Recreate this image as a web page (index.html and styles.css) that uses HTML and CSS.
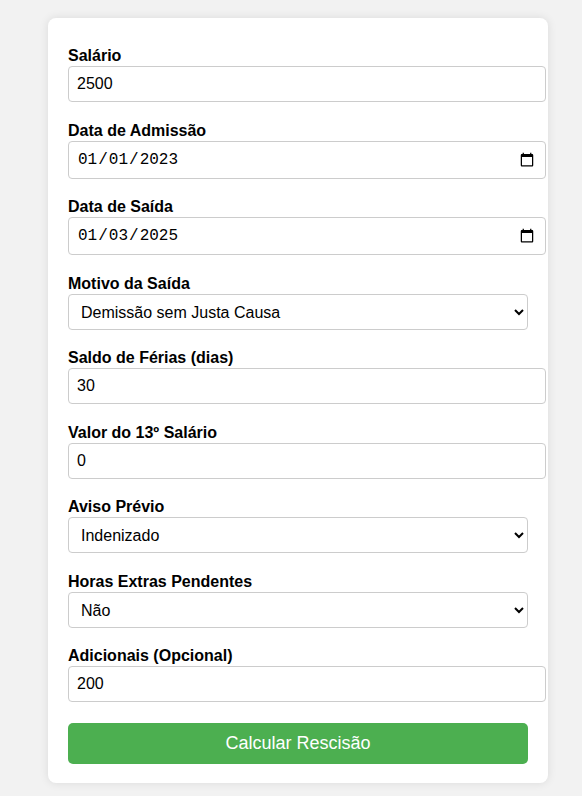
FILE: index.html
```html
<!DOCTYPE html>
<html lang="pt-BR">
<head>
<meta charset="utf-8">
<title>Calculadora de Rescisão</title>
<link rel="stylesheet" href="styles.css">
</head>
<body>
<div class="card">
  <form class="form">
    <div class="field">
      <label class="label" for="salario">Salário</label>
      <input class="control text" id="salario" type="number" value="2500">
    </div>
    <div class="field">
      <label class="label" for="admissao">Data de Admissão</label>
      <input class="control text date" id="admissao" type="date" value="2023-01-01">
    </div>
    <div class="field">
      <label class="label" for="saida">Data de Saída</label>
      <input class="control text date" id="saida" type="date" value="2025-01-03">
    </div>
    <div class="field">
      <label class="label" for="motivo">Motivo da Saída</label>
      <select class="control sel" id="motivo">
        <option>Demissão sem Justa Causa</option>
        <option>Demissão com Justa Causa</option>
        <option>Pedido de Demissão</option>
      </select>
    </div>
    <div class="field">
      <label class="label" for="ferias">Saldo de Férias (dias)</label>
      <input class="control text" id="ferias" type="number" value="30">
    </div>
    <div class="field">
      <label class="label" for="decimo">Valor do 13º Salário</label>
      <input class="control text" id="decimo" type="number" value="0">
    </div>
    <div class="field">
      <label class="label" for="aviso">Aviso Prévio</label>
      <select class="control sel" id="aviso">
        <option>Indenizado</option>
        <option>Trabalhado</option>
      </select>
    </div>
    <div class="field">
      <label class="label" for="horas">Horas Extras Pendentes</label>
      <select class="control sel" id="horas">
        <option>Não</option>
        <option>Sim</option>
      </select>
    </div>
    <div class="field">
      <label class="label" for="adicionais">Adicionais (Opcional)</label>
      <input class="control text" id="adicionais" type="number" value="200">
    </div>
    <button class="btn" type="button">Calcular Rescisão</button>
  </form>
</div>
</body>
</html>
```

FILE: styles.css
```css
html, body {
  margin: 0;
  padding: 0;
}
body {
  background: #f2f2f2;
  font-family: "Liberation Sans", Arial, sans-serif;
  padding: 18px 0 13px 48px;
}
.card {
  width: 500px;
  box-sizing: border-box;
  background: #fff;
  border-radius: 8px;
  box-shadow: 0 0 10px rgba(0, 0, 0, 0.1);
  padding: 29px 20px 19px 20px;
}
.form {
  display: flex;
  flex-direction: column;
  gap: 19.5px;
}
.field {
  display: flex;
  flex-direction: column;
  align-items: flex-start;
  gap: 1px;
}
.label {
  font-weight: bold;
  font-size: 16px;
  color: #000;
  line-height: 18px;
}
.control {
  font-size: 16px;
  font-family: "Liberation Sans", Arial, sans-serif;
  color: #000;
  border: 1px solid #ccc;
  border-radius: 4px;
  padding: 8px;
  margin: 0;
  background: #fff;
}
.text {
  box-sizing: content-box;
  width: 460px;
}
.date {
  font-family: "Liberation Mono", monospace;
  box-sizing: border-box;
  width: 478px;
  height: 38px;
}
.sel {
  box-sizing: border-box;
  width: 460px;
  height: 36px;
}
input[type=number]::-webkit-inner-spin-button,
input[type=number]::-webkit-outer-spin-button {
  -webkit-appearance: none;
  margin: 0;
}
input[type=number] {
  -moz-appearance: textfield;
}
.btn {
  margin-top: 1px;
  width: 460px;
  height: 41px;
  padding: 10px;
  border: none;
  border-radius: 5px;
  background: #4caf50;
  color: #fff;
  font-family: "Liberation Sans", Arial, sans-serif;
  font-size: 18px;
  line-height: normal;
}
```
